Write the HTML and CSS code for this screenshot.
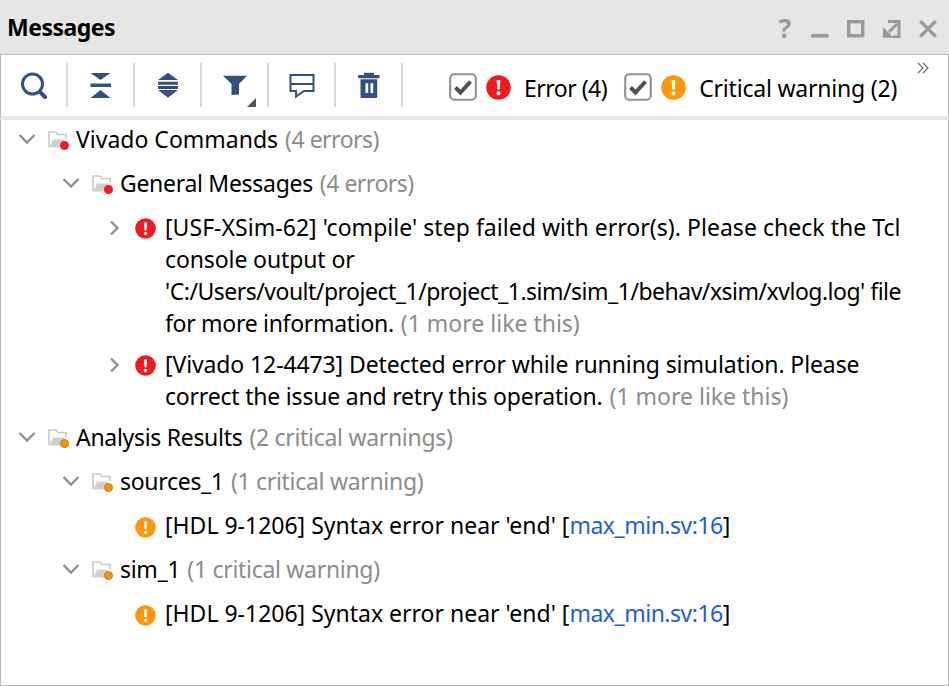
FILE: index.html
```html
<!DOCTYPE html>
<html lang="en">
<head>
<meta charset="utf-8">
<title>Messages</title>
<link rel="stylesheet" href="styles.css">
</head>
<body>
<svg class="defs" width="0" height="0" aria-hidden="true">
  <defs>
    <symbol id="err" viewBox="0 0 24 24"><circle cx="12" cy="12" r="11.8" fill="#ee1c1f"/><path d="M10.2 5h3.6l-.6 9h-2.4z" fill="#fff"/><circle cx="12" cy="17.6" r="1.9" fill="#fff"/></symbol>
    <symbol id="warn" viewBox="0 0 24 24"><circle cx="12" cy="12" r="11.8" fill="#fb980d"/><path d="M10.2 5h3.6l-.6 9h-2.4z" fill="#fff"/><circle cx="12" cy="17.6" r="1.9" fill="#fff"/></symbol>
    <symbol id="check" viewBox="0 0 28 28"><rect x="1.2" y="1.2" width="25.6" height="25.6" rx="4" fill="#fff" stroke="#8e8e8e" stroke-width="2"/><path d="M6.5 14.5l5 5L21.5 8.5" fill="none" stroke="#505050" stroke-width="4"/></symbol>
    <symbol id="down" viewBox="0 0 18 12"><path d="M1.5 2l7.5 7.5L16.5 2" fill="none" stroke="#8f8f8f" stroke-width="2.4"/></symbol>
    <symbol id="right" viewBox="0 0 12 18"><path d="M3 2.5l6.5 6.5-6.5 6.5" fill="none" stroke="#8f8f8f" stroke-width="2.4"/></symbol>
    <symbol id="folder" viewBox="0 0 22 20"><path d="M1 18V3h7l2 2.5h8V10" fill="none" stroke="#c9c9c9" stroke-width="1.6"/><path d="M1.5 18.5l3.5-8h11l-1 8z" fill="#cfcfcf"/></symbol>
  </defs>
</svg>
<main class="panel">
  <header class="titlebar">
    <h1 class="title">Messages</h1>
    <div class="window-controls">
      <span class="help">?</span>
      <svg class="wc" viewBox="0 0 18 18"><path d="M0 14h17.5v3.6H0z" fill="#999"/></svg>
      <svg class="wc" viewBox="0 0 18 18"><rect x="1.7" y="1.7" width="14" height="14" fill="none" stroke="#999" stroke-width="3.4"/></svg>
      <svg class="wc" viewBox="0 0 18 18"><path d="M5 1.5h11V17h-6M14 4l-8 8" fill="none" stroke="#999" stroke-width="3"/><path d="M0 17.7V7l10.7 10.7z" fill="#999"/></svg>
      <svg class="wc" viewBox="0 0 18 18"><path d="M1.2 1l15.6 15.6M16.8 1L1.2 16.6" stroke="#999" stroke-width="3.2"/></svg>
    </div>
  </header>
  <div class="toolbar">
    <div class="tool"><svg class="tool-icon" viewBox="0 0 28 28"><circle cx="12.5" cy="13" r="10" fill="none" stroke="#34507f" stroke-width="3"/><path d="M21 22l4 4" stroke="#34507f" stroke-width="4" stroke-linecap="round"/></svg></div>
    <div class="tool"><svg class="tool-icon" viewBox="0 0 28 28"><path d="M3.5 2h20l-10 7zM3.5 27h20l-10-8zM3.5 12.5h20.5V16H3.5z" fill="#34507f"/></svg></div>
    <div class="tool"><svg class="tool-icon" viewBox="0 0 28 28"><path d="M14 1.7L24 9H4zM14 26.7L24 19H4zM4 10.7h20v3H4zM4 15h20v3H4z" fill="#34507f"/></svg></div>
    <div class="tool">
      <svg class="tool-icon" viewBox="0 0 28 28"><path d="M2 4.7h24L18 13v10.5l-7.5.5V13z" fill="#34507f"/></svg>
      <span class="corner"></span>
    </div>
    <div class="tool"><svg class="tool-icon" viewBox="0 0 28 28"><path d="M2.5 4h23v16H16l-8 5.5V20H2.5zM2.5 13h23" fill="none" stroke="#34507f" stroke-width="2"/></svg></div>
    <div class="tool"><svg class="tool-icon" viewBox="0 0 28 28"><path d="M3.2 4h21.3v3.3H3.2zM9 1.7h10V4H9z" fill="#34507f"/><path d="M5.5 8.3h16.7V26a1 1 0 0 1-1 1H6.5a1 1 0 0 1-1-1z" fill="#34507f"/><path d="M10.5 12.3h2.7V22h-2.7zM15.5 12.3h2.7V22h-2.7z" fill="#fff"/></svg></div>
    <div class="filters">
      <svg class="check"><use href="#check"/></svg>
      <svg class="sev"><use href="#err"/></svg>
      <span class="filter-label s5">Error (4)</span>
      <svg class="check second"><use href="#check"/></svg>
      <svg class="sev"><use href="#warn"/></svg>
      <span class="filter-label s2">Critical warning (2)</span>
    </div>
    <svg class="more" viewBox="0 0 12 12"><path d="M1 1l5 5-5 5M6 1l5 5-5 5" fill="none" stroke="#666" stroke-width="1.1"/></svg>
  </div>
  <div class="tree">
    <div class="row d0"><svg class="tw-down"><use href="#down"/></svg><span class="fold"><svg class="folder"><use href="#folder"/></svg><i class="dot red"></i></span><span>Vivado Commands <span class="muted s5">(4 errors)</span></span></div>
    <div class="row d1"><svg class="tw-down"><use href="#down"/></svg><span class="fold"><svg class="folder"><use href="#folder"/></svg><i class="dot red"></i></span><span><span class="s3">General Messages</span> <span class="muted s5">(4 errors)</span></span></div>
    <div class="msg"><svg class="tw-right"><use href="#right"/></svg><svg class="sev-sm"><use href="#err"/></svg><p class="text"><span class="p0">[USF-XSim-62] 'compile' step failed with error(s). Please check the Tcl</span><br><span class="s1">console output or</span><br><span class="s5">'C:/Users/voult/project_1/project_1.sim/sim_1/behav/xsim/xvlog.log' file</span><br><span class="s3">for more information.</span> <span class="muted">(1 more like this)</span></p></div>
    <div class="msg"><svg class="tw-right"><use href="#right"/></svg><svg class="sev-sm"><use href="#err"/></svg><p class="text"><span class="s1">[Vivado 12-4473] Detected error while running simulation. Please</span><br><span class="s2">correct the issue and retry this operation.</span> <span class="muted">(1 more like this)</span></p></div>
    <div class="row d0"><svg class="tw-down"><use href="#down"/></svg><span class="fold"><svg class="folder"><use href="#folder"/></svg><i class="dot orange"></i></span><span><span class="s3">Analysis Results</span> <span class="muted s3">(2 critical warnings)</span></span></div>
    <div class="row d1"><svg class="tw-down"><use href="#down"/></svg><span class="fold"><svg class="folder"><use href="#folder"/></svg><i class="dot orange"></i></span><span><span class="s3">sources_1</span> <span class="muted s3">(1 critical warning)</span></span></div>
    <div class="row d2"><svg class="sev-sm"><use href="#warn"/></svg><span class="text">[HDL 9-1206] Syntax error near 'end' [<span class="link s5">max_min.sv:16</span>]</span></div>
    <div class="row d1"><svg class="tw-down"><use href="#down"/></svg><span class="fold"><svg class="folder"><use href="#folder"/></svg><i class="dot orange"></i></span><span><span class="s3">sim_1</span> <span class="muted s3">(1 critical warning)</span></span></div>
    <div class="row d2"><svg class="sev-sm"><use href="#warn"/></svg><span class="text">[HDL 9-1206] Syntax error near 'end' [<span class="link s5">max_min.sv:16</span>]</span></div>
  </div>
</main>
</body>
</html>
```
FILE: styles.css
```css
html, body { margin: 0; padding: 0; }
body { width: 949px; height: 686px; overflow: hidden; background: #fff; font-family: "Noto Sans", "Open Sans", sans-serif; color: #000; }
.defs { position: absolute; }
.panel { width: 949px; height: 686px; box-sizing: border-box; display: flex; flex-direction: column; }
.titlebar { height: 54px; flex: none; background: #e6e6e6; display: flex; align-items: center; justify-content: space-between; padding: 0 12px 0 7px; border-bottom: 1px solid #bbb; }
.title { margin: 0; font-size: 23px; font-weight: 700; letter-spacing: -0.5px; }
.window-controls { display: flex; align-items: center; gap: 18px; margin-top: 3px; }
.help { font-size: 26px; font-weight: 700; color: #999; line-height: 1; width: 16px; text-align: center; margin-top: -2px; }
.wc { width: 18px; height: 18px; display: block; }
.toolbar { position: relative; flex: none; display: flex; align-items: center; box-sizing: border-box; border-left: 1px solid #bbb; border-right: 1px solid #bbb; border-bottom: 4px solid #e6e6e6; height: 65px; }
.tool { position: relative; width: 65px; height: 44px; margin-bottom: 1px; border-right: 2px solid #d9d9d9; display: flex; align-items: center; justify-content: center; }
.tool-icon { width: 28px; height: 28px; }
.corner { position: absolute; right: 11px; bottom: 0; width: 0; height: 0; border-left: 9px solid transparent; border-bottom: 9px solid #555; }
.filters { display: flex; align-items: center; margin-left: 46px; margin-top: 4px; font-size: 23px; white-space: nowrap; }
.check { width: 28px; height: 28px; margin-bottom: 2px; }
.check.second { margin-left: 17px; }
.sev { width: 25px; height: 25px; margin-left: 9px; margin-bottom: 1px; }
.filter-label { margin-left: 13px; }
.more { position: absolute; right: 19px; top: 7px; width: 12px; height: 12px; }
.tree { flex: 1; margin-top: -3px; border-left: 1px solid #bbb; border-right: 1px solid #bbb; border-bottom: 1px solid #bbb; font-size: 23px; }
.row { height: 44px; display: flex; align-items: center; white-space: nowrap; }
.d0 { padding-left: 17px; }
.d1 { padding-left: 61px; }
.d2 { padding-left: 134px; }
.tw-down { width: 18px; height: 12px; flex: none; margin-right: 12px; }
.fold { position: relative; width: 24px; height: 20px; flex: none; margin-right: 4px; }
.folder { width: 22px; height: 20px; display: block; }
.dot { position: absolute; right: 3px; bottom: -1px; width: 9.5px; height: 9.5px; border-radius: 50%; }
.dot.red { background: #ee1c1f; }
.dot.orange { background: #f7920f; border: 1px solid #c77a10; box-sizing: border-box; }
.muted { color: #8c8c8c; margin-left: 1px; }
.link { color: #1a5fd8; }
.msg { display: flex; align-items: flex-start; padding: 6px 0 3px 107px; }
.tw-right { width: 12px; height: 18px; flex: none; margin: 8px 15px 0 0; }
.sev-sm { width: 21px; height: 21px; flex: none; margin: 7px 9px 0 0; }
.d2 .sev-sm { margin-top: 4px; }
.text { margin: 0; line-height: 32px; white-space: nowrap; }
.p0 { letter-spacing: 0.04px; }
.s1 { letter-spacing: -0.11px; }
.s2 { letter-spacing: -0.2px; }
.s3 { letter-spacing: -0.3px; }
.s5 { letter-spacing: -0.5px; }
```
